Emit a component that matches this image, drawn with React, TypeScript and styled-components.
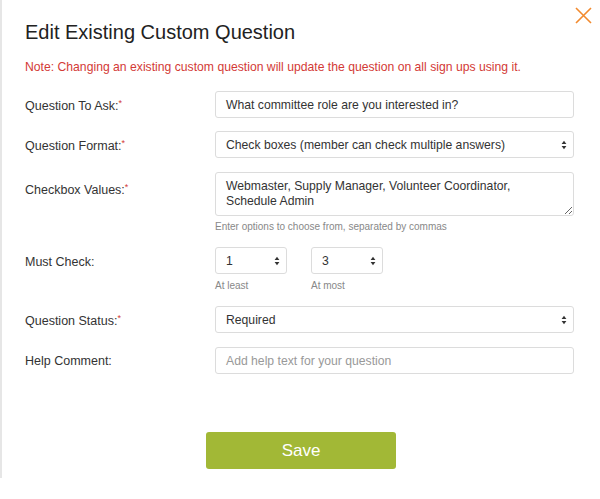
import React from "react";
import styled, { createGlobalStyle } from "styled-components";

const Global = createGlobalStyle`
  html, body { margin: 0; padding: 0; background: #fff; }
  body { font-family: "Liberation Sans", Arial, Helvetica, sans-serif; color: #333; }
  * { box-sizing: border-box; }
`;

const Backdrop = styled.div`
  height: 478px;
  background: #e6e6e6;
  padding: 0 3px 0 2px;
  display: flex;
`;

const Modal = styled.div`
  position: relative;
  flex: 1;
  background: #fff;
  padding: 20px 26px 0 23px;
  display: flex;
  flex-direction: column;
`;

const Close = styled.button`
  position: absolute;
  top: 7px;
  right: 8px;
  width: 17px;
  height: 17px;
  padding: 0;
  border: 0;
  background: none;
  cursor: pointer;
  display: flex;
`;

const Title = styled.h1`
  margin: 0;
  font-size: 20px;
  font-weight: 400;
  line-height: 24px;
  color: #222;
`;

const Note = styled.p`
  margin: 14.5px 0 16.5px;
  font-size: 12.2px;
  line-height: 16px;
  color: #d33a36;
`;

const Form = styled.div`
  display: flex;
  flex-direction: column;
`;

const Row = styled.div<{ $gap?: number; $top?: boolean }>`
  display: grid;
  grid-template-columns: 190px 359px;
  align-items: ${(p) => (p.$top ? "start" : "center")};
  margin-bottom: ${(p) => p.$gap ?? 13}px;
`;

const Label = styled.label<{ $pt?: number }>`
  font-size: 12.5px;
  line-height: 16px;
  color: #333;
  padding-top: ${(p) => p.$pt ?? 0}px;
`;

const Req = styled.span`
  color: #d33a36;
  font-size: 9px;
  vertical-align: 4px;
`;

const Field = styled.div`
  display: flex;
  flex-direction: column;
`;

const Input = styled.div<{ $placeholder?: boolean }>`
  height: 27px;
  border: 1px solid #dcdcdc;
  border-radius: 3px;
  padding: 0 10px;
  display: flex;
  align-items: center;
  font-size: 12.2px;
  color: ${(p) => (p.$placeholder ? "#999" : "#333")};
  background: #fff;
`;

const Select = styled(Input)<{ $w?: number }>`
  justify-content: space-between;
  width: ${(p) => (p.$w ? `${p.$w}px` : "auto")};
  padding-right: 6px;
`;

const TextArea = styled.textarea`
  height: 44px;
  border: 1px solid #dcdcdc;
  border-radius: 3px;
  padding: 6px 10px 0;
  font-family: "Liberation Sans", Arial, Helvetica, sans-serif;
  font-size: 12.2px;
  line-height: 15px;
  color: #333;
  resize: vertical;
  outline: none;
  overflow: hidden;
`;

const Hint = styled.div<{ $mt?: number }>`
  font-size: 10px;
  line-height: 13px;
  color: #888;
  margin-top: ${(p) => p.$mt ?? 4.5}px;
`;

const Pair = styled.div`
  display: flex;
  gap: 24px;
`;

const Footer = styled.div`
  display: flex;
  padding-left: 181px;
  margin-top: 58px;
`;

const SaveButton = styled.button`
  width: 190px;
  height: 37px;
  border: 0;
  border-radius: 3px;
  background: #a2b836;
  color: #fff;
  font-family: "Liberation Sans", Arial, Helvetica, sans-serif;
  font-size: 17px;
  cursor: pointer;
`;

const Arrows = () => (
  <svg width="6" height="10" viewBox="0 0 6 10" aria-hidden>
    <path d="M3 0.8 L5.4 4 H0.6 Z M3 9.2 L0.6 6 H5.4 Z" fill="#333" />
  </svg>
);

export default function App() {
  return (
    <>
      <Global />
      <Backdrop>
        <Modal>
          <Close aria-label="Close">
            <svg width="17" height="17" viewBox="0 0 17 17">
              <path d="M1 1 L16 16 M16 1 L1 16" stroke="#f28a2e" strokeWidth="1.6" />
            </svg>
          </Close>
          <Title>Edit Existing Custom Question</Title>
          <Note>Note: Changing an existing custom question will update the question on all sign ups using it.</Note>
          <Form>
            <Row>
              <Label>Question To Ask:<Req>*</Req></Label>
              <Input>What committee role are you interested in?</Input>
            </Row>
            <Row $gap={14}>
              <Label>Question Format:<Req>*</Req></Label>
              <Select>
                Check boxes (member can check multiple answers)
                <Arrows />
              </Select>
            </Row>
            <Row $top $gap={14.5}>
              <Label $pt={7}>Checkbox Values:<Req>*</Req></Label>
              <Field>
                <TextArea
                  readOnly
                  value="Webmaster, Supply Manager, Volunteer Coordinator, Schedule Admin"
                />
                <Hint $mt={3.5}>Enter options to choose from, separated by commas</Hint>
              </Field>
            </Row>
            <Row $top $gap={14.5}>
              <Label $pt={7}>Must Check:</Label>
              <Pair>
                <Field>
                  <Select $w={72}>1<Arrows /></Select>
                  <Hint>At least</Hint>
                </Field>
                <Field>
                  <Select $w={72}>3<Arrows /></Select>
                  <Hint>At most</Hint>
                </Field>
              </Pair>
            </Row>
            <Row $gap={14}>
              <Label>Question Status:<Req>*</Req></Label>
              <Select>
                Required
                <Arrows />
              </Select>
            </Row>
            <Row $gap={0}>
              <Label>Help Comment:</Label>
              <Input $placeholder>Add help text for your question</Input>
            </Row>
          </Form>
          <Footer>
            <SaveButton>Save</SaveButton>
          </Footer>
        </Modal>
      </Backdrop>
    </>
  );
}
